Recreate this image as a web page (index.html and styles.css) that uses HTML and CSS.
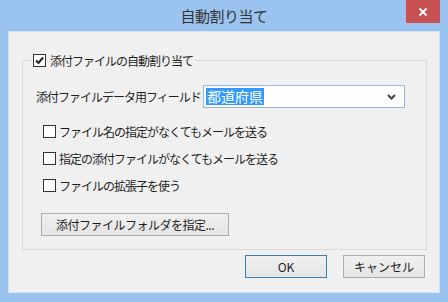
FILE: index.html
```html
<!DOCTYPE html>
<html lang="ja">
<head>
  <meta charset="UTF-8" />
  <title>自動割り当て</title>
  <link rel="stylesheet" href="styles.css">
</head>
<body>
  <div class="dialog">
    <div class="titlebar">
      <span class="title">自動割り当て</span>
      <button class="close-btn" aria-label="閉じる">
        <svg width="10" height="10" viewBox="0 0 10 10"><path d="M1.5 1.5 L8.5 8.5 M8.5 1.5 L1.5 8.5" stroke="#fff" stroke-width="1.8" /></svg>
      </button>
    </div>

    <div class="dialog-body">
      <fieldset class="group">
        <legend class="group-title">
          <span class="check checked">
            <svg width="11" height="11" viewBox="0 0 11 11"><path d="M2 5.5 L4.5 8 L9 2.5" fill="none" stroke="#222" stroke-width="2" /></svg>
          </span>
          添付ファイルの自動割り当て
        </legend>

        <div class="group-content">
          <div class="field-row">
            <span class="field-label">添付ファイルデータ用フィールド</span>
            <div class="combo">
              <span class="combo-value">都道府県</span>
              <svg class="combo-arrow" width="9" height="6" viewBox="0 0 9 6"><path d="M1 1 L4.5 4.5 L8 1" fill="none" stroke="#444" stroke-width="2" /></svg>
            </div>
          </div>

          <ul class="options">
            <li><span class="check"></span>ファイル名の指定がなくてもメールを送る</li>
            <li><span class="check"></span>指定の添付ファイルがなくてもメールを送る</li>
            <li><span class="check"></span>ファイルの拡張子を使う</li>
          </ul>

          <button class="btn folder-btn">添付ファイルフォルダを指定...</button>
        </div>
      </fieldset>

      <div class="footer">
        <button class="btn btn-default">OK</button>
        <button class="btn">キャンセル</button>
      </div>
    </div>
  </div>
</body>
</html>
```

FILE: styles.css
```css
* {
  margin: 0;
  padding: 0;
  box-sizing: border-box;
}

body {
  width: 448px;
  height: 302px;
  overflow: hidden;
  background: #9ac4ef;
  font-family: 'Noto Sans CJK JP', 'Liberation Sans', sans-serif;
  font-size: 12px;
  color: #1e1e1e;
}

.dialog {
  height: 302px;
  display: flex;
  flex-direction: column;
  padding: 0 8px 9px 8px;
}

.titlebar {
  position: relative;
  height: 31px;
  display: flex;
  align-items: center;
  justify-content: center;
}

.title {
  font-size: 15px;
  color: #333;
  letter-spacing: -0.5px;
  margin-top: -1px;
}

.close-btn {
  position: absolute;
  top: 0;
  right: 0;
  width: 34px;
  height: 23px;
  border: none;
  background: #c75050;
  display: flex;
  align-items: center;
  justify-content: center;
}

.dialog-body {
  flex: 1;
  background: #f0f0f0;
  border: 1px solid #cfe1f4;
  padding: 20px 12px 0 13px;
  display: flex;
  flex-direction: column;
}

.group {
  border: 1px solid #dcdcdc;
  padding: 0;
}

.group-title {
  margin-left: 8px;
  padding: 0 2px;
  display: flex;
  align-items: center;
  gap: 4px;
  letter-spacing: -1px;
}

.group-content {
  padding: 0 0 13px 13px;
}

.check {
  width: 13px;
  height: 13px;
  border: 1px solid #333;
  background: #fff;
  display: inline-flex;
  align-items: center;
  justify-content: center;
  flex-shrink: 0;
}

.field-row {
  display: flex;
  align-items: center;
  margin-top: 16px;
}

.field-label {
  letter-spacing: -1px;
  width: 167px;
}

.combo {
  width: 202px;
  height: 23px;
  border: 1px solid #9cb7d9;
  background: #fff;
  display: flex;
  align-items: center;
  justify-content: space-between;
  padding: 0 8px 0 2px;
}

.combo-value {
  background: #3399ff;
  color: #fff;
  font-size: 14px;
  line-height: 17px;
  padding: 0 1px;
}

.options {
  list-style: none;
  margin-top: 15px;
  padding-left: 7px;
  display: flex;
  flex-direction: column;
  gap: 10px;
}

.options li {
  display: flex;
  align-items: center;
  gap: 3px;
  height: 17px;
  letter-spacing: -1px;
}

.btn {
  height: 23px;
  border: 1px solid #acacac;
  background: linear-gradient(#f0f0f0, #e5e5e5);
  font-family: inherit;
  font-size: 12px;
  color: #1e1e1e;
}

.folder-btn {
  width: 188px;
  margin: 19px 0 0 5px;
  letter-spacing: -0.5px;
}

.footer {
  display: flex;
  justify-content: flex-end;
  gap: 16px;
  margin-top: 5px;
  padding-right: 2px;
}

.footer .btn {
  width: 82px;
}

.btn-default {
  border-color: #3c7fb1;
}
```
